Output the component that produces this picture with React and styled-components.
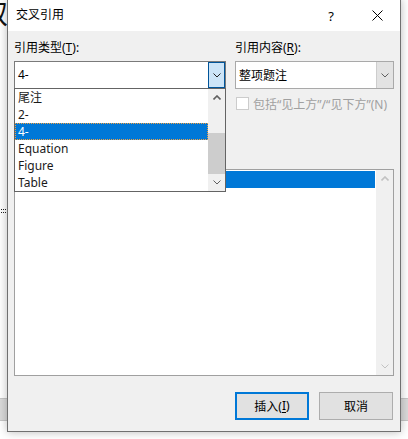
import React from 'react';
import styled, { createGlobalStyle } from 'styled-components';

// global
const GlobalStyle = createGlobalStyle`
  html, body {
    margin: 0;
    padding: 0;
    background: #fff;
  }
  body {
    overflow: hidden;
    font-family: "Noto Sans", "Noto Sans CJK SC", sans-serif;
    font-size: 12px;
    color: #000;
  }
`;

// document behind the dialog
const Page = styled.div`
  position: relative;
  width: 408px;
  height: 439px;
  overflow: hidden;
  background: #fff;
`;

const Doc = styled.div`
  display: flex;
  flex-direction: column;
`;

const DocGlyph = styled.div`
  height: 30px;
  margin-left: -19px;
  font-family: "Noto Sans CJK SC", sans-serif;
  font-size: 27px;
  line-height: 26px;
  color: #111;
`;

const DocMark = styled.div`
  width: 7px;
  height: 2px;
  margin: 179px 0 0 1px;
  border-top: 1px dotted #222;
  border-bottom: 1px dotted #222;
`;

const DocStrip = styled.div`
  height: 21px;
  margin-top: 185px;
  background: #dadada;
  border-top: 1px solid #c6c6c6;
  border-bottom: 1px solid #c6c6c6;
`;

// dialog
const Dialog = styled.div`
  position: absolute;
  left: 7px;
  top: -1px;
  width: 394px;
  height: 433px;
  box-sizing: border-box;
  border: 1px solid #707070;
  background: #f0f0f0;
  box-shadow: 0 0 9px rgba(0, 0, 0, 0.28);
  display: flex;
  flex-direction: column;
`;

const TitleBar = styled.div`
  height: 31px;
  flex: none;
  background: #fff;
  display: flex;
  align-items: center;
  padding-left: 8px;
`;

const Title = styled.span`
  font-size: 12px;
  line-height: 16px;
  margin-top: -1px;
`;

const TitleButton = styled.div`
  width: 46px;
  height: 31px;
  display: flex;
  align-items: center;
  justify-content: center;
  margin-left: ${p => (p.$first ? 'auto' : '0')};
  font-size: 13px;
`;

const Body = styled.div`
  position: relative;
  flex: 1;
  padding: 9px 6px 0 6px;
  display: flex;
  flex-direction: column;
`;

const TopGrid = styled.div`
  display: grid;
  grid-template-columns: 212px 159px;
  column-gap: 9px;
`;

const Column = styled.div`
  display: flex;
  flex-direction: column;
`;

const Label = styled.div`
  height: 16px;
  line-height: 16px;
  margin-bottom: 5px;
  white-space: nowrap;
  u {
    text-underline-offset: 2px;
  }
`;

const Combo = styled.div`
  height: 28px;
  box-sizing: border-box;
  border: 1px solid ${p => (p.$focus ? '#7a7a7a' : '#a9a9a9')};
  background: #fff;
  display: flex;
  align-items: stretch;
`;

const ComboText = styled.div`
  flex: 1;
  display: flex;
  align-items: center;
  padding-left: 3px;
  padding-bottom: 1px;
`;

const ComboButton = styled.div`
  width: 17px;
  flex: none;
  box-sizing: border-box;
  display: flex;
  align-items: center;
  justify-content: center;
  background: ${p => (p.$focus ? '#cce4f7' : '#e3e3e3')};
  border: ${p => (p.$focus ? '1px solid #005499' : 'none')};
  border-left: 1px solid ${p => (p.$focus ? '#005499' : '#cdcdcd')};
`;

const CheckRow = styled.div`
  display: flex;
  align-items: center;
  margin-top: 8px;
  height: 13px;
  color: #a0a0a0;
  white-space: nowrap;
`;

const CheckBox = styled.div`
  width: 13px;
  height: 13px;
  box-sizing: border-box;
  border: 1px solid #cccccc;
  background: #fff;
  margin: 0 4px 0 1px;
  flex: none;
`;

const ListBox = styled.div`
  height: 207px;
  margin-top: 59px;
  box-sizing: border-box;
  border: 1px solid #a0a0a0;
  background: #fff;
  display: flex;
`;

const ListRows = styled.div`
  flex: 1;
  padding: 1px;
`;

const ListRow = styled.div`
  height: 17px;
  background: ${p => (p.$selected ? '#0078d7' : 'transparent')};
`;

const ScrollBar = styled.div`
  width: 17px;
  flex: none;
  background: #f0f0f0;
  display: flex;
  flex-direction: column;
`;

const ScrollArrow = styled.div`
  height: 17px;
  flex: none;
  display: flex;
  align-items: center;
  justify-content: center;
`;

const ScrollTrack = styled.div`
  flex: 1;
  display: flex;
  flex-direction: column;
`;

const ScrollThumb = styled.div`
  height: ${p => p.$size}px;
  margin-top: ${p => p.$offset}px;
  background: #cdcdcd;
`;

const ButtonRow = styled.div`
  display: flex;
  justify-content: flex-end;
  gap: 10px;
  margin-top: 16px;
  padding-right: 1px;
`;

const Button = styled.div`
  width: 74px;
  height: 28px;
  box-sizing: border-box;
  border: ${p => (p.$default ? '2px solid #0078d7' : '1px solid #adadad')};
  background: #e1e1e1;
  display: flex;
  align-items: center;
  justify-content: center;
  padding-bottom: 1px;
  u {
    text-underline-offset: 2px;
  }
`;

// dropdown popup (over the dialog)
const Popup = styled.div`
  position: absolute;
  left: 6px;
  top: 57px;
  width: 212px;
  height: 104px;
  box-sizing: border-box;
  border: 1px solid #646464;
  background: #fff;
  display: flex;
`;

const PopupItems = styled.div`
  flex: 1;
  display: flex;
  flex-direction: column;
`;

const PopupItem = styled.div`
  height: 17px;
  box-sizing: border-box;
  line-height: 15px;
  padding-left: 2px;
  border: 1px ${p => (p.$selected ? 'dotted #f0a040' : 'solid transparent')};
  background: ${p => (p.$selected ? '#0078d7' : 'transparent')};
  color: ${p => (p.$selected ? '#fff' : '#1a1a1a')};
  white-space: nowrap;
`;

const Chevron = ({ up, color = '#333', w = 8 }) => (
  <svg width={w} height="5" viewBox="0 0 8 5">
    <polyline
      points={up ? '0.5,4.5 4,1 7.5,4.5' : '0.5,0.5 4,4 7.5,0.5'}
      fill="none"
      stroke={color}
      strokeWidth={up ? 1.6 : 1}
    />
  </svg>
);

const CloseIcon = () => (
  <svg width="11" height="11" viewBox="0 0 11 11">
    <path d="M0.5 0.5 L10.5 10.5 M10.5 0.5 L0.5 10.5" stroke="#000" strokeWidth="1" />
  </svg>
);

const types = ['尾注', '2-', '4-', 'Equation', 'Figure', 'Table'];

export default function App() {
  return (
    <Page>
      <GlobalStyle />
      <Doc>
        <DocGlyph>奴</DocGlyph>
        <DocMark />
        <DocStrip />
      </Doc>

      <Dialog>
        <TitleBar>
          <Title>交叉引用</Title>
          <TitleButton $first>?</TitleButton>
          <TitleButton>
            <CloseIcon />
          </TitleButton>
        </TitleBar>

        <Body>
          <TopGrid>
            <Column>
              <Label>
                引用类型(<u>T</u>):
              </Label>
              <Combo $focus>
                <ComboText>4-</ComboText>
                <ComboButton $focus>
                  <Chevron color="#222" />
                </ComboButton>
              </Combo>
            </Column>
            <Column>
              <Label>
                引用内容(<u>R</u>):
              </Label>
              <Combo>
                <ComboText>整项题注</ComboText>
                <ComboButton>
                  <Chevron color="#606060" />
                </ComboButton>
              </Combo>
              <CheckRow>
                <CheckBox />
                包括“见上方”/“见下方”(N)
              </CheckRow>
            </Column>
          </TopGrid>

          <ListBox>
            <ListRows>
              <ListRow $selected />
            </ListRows>
            <ScrollBar>
              <ScrollArrow>
                <Chevron up color="#c2c2c2" />
              </ScrollArrow>
              <ScrollTrack />
              <ScrollArrow>
                <Chevron color="#c2c2c2" />
              </ScrollArrow>
            </ScrollBar>
          </ListBox>

          <ButtonRow>
            <Button $default>
              插入(<u>I</u>)
            </Button>
            <Button>取消</Button>
          </ButtonRow>

          <Popup>
            <PopupItems>
              {types.map(t => (
                <PopupItem key={t} $selected={t === '4-'}>
                  {t}
                </PopupItem>
              ))}
            </PopupItems>
            <ScrollBar>
              <ScrollArrow>
                <Chevron up color="#606060" />
              </ScrollArrow>
              <ScrollTrack>
                <ScrollThumb $offset={27} $size={41} />
              </ScrollTrack>
              <ScrollArrow>
                <Chevron color="#606060" />
              </ScrollArrow>
            </ScrollBar>
          </Popup>
        </Body>
      </Dialog>
    </Page>
  );
}
